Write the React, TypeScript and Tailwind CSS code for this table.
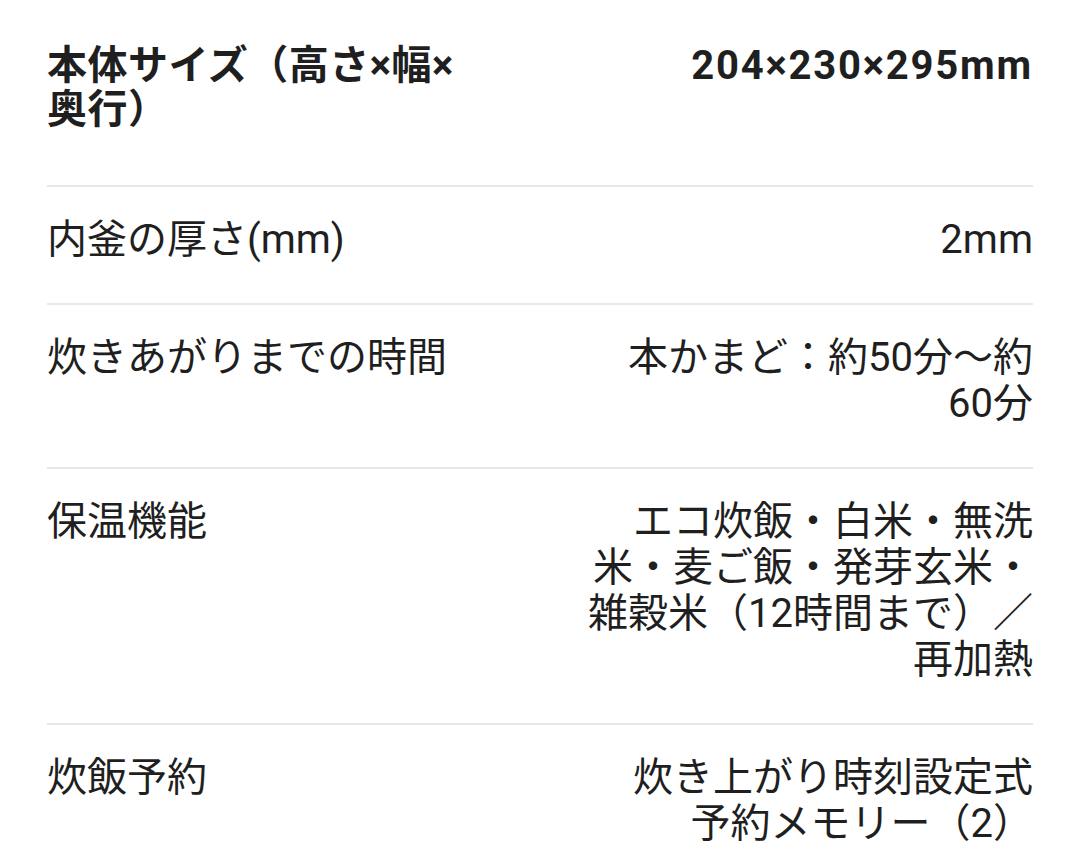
import React from 'react';

interface SpecRow {
    label: string;
    value: React.ReactNode;
    bold?: boolean;
}

const rows: SpecRow[] = [
    { label: '本体サイズ（高さ×幅×奥行）', value: '204×230×295mm', bold: true },
    { label: '内釜の厚さ(mm)', value: '2mm' },
    { label: '炊きあがりまでの時間', value: '本かまど：約50分～約60分' },
    { label: '保温機能', value: 'エコ炊飯・白米・無洗米・麦ご飯・発芽玄米・雑穀米（12時間まで）／再加熱' },
    {
        label: '炊飯予約',
        value: (
            <>
                炊き上がり時刻設定式
                <br />
                予約メモリー（2）
            </>
        ),
    },
];

const App: React.FC = () => {
    return (
        <div
            className="min-h-screen bg-white px-[47px] text-[40px] text-[#1f1f1f]"
            style={{ fontFamily: 'Roboto, "Noto Sans CJK JP", sans-serif' }}
        >
            {rows.map((row, i) => (
                <div
                    key={i}
                    className={
                        i === 0
                            ? 'flex items-start justify-between pt-[44px] pb-[53px]'
                            : 'flex items-start justify-between border-t-2 border-[#e8e8e8] pt-[30px] pb-[40px]'
                    }
                >
                    <div
                        className={
                            row.bold
                                ? 'max-w-[420px] font-bold leading-[44px] tracking-[0.5px]'
                                : 'max-w-[420px] leading-[46px]'
                        }
                    >
                        {row.label}
                    </div>
                    <div
                        className={
                            row.bold
                                ? 'max-w-[446px] text-right font-bold leading-[44px] tracking-[1.8px]'
                                : 'max-w-[446px] text-right leading-[46px]'
                        }
                    >
                        {row.value}
                    </div>
                </div>
            ))}
        </div>
    );
};

export default App;
